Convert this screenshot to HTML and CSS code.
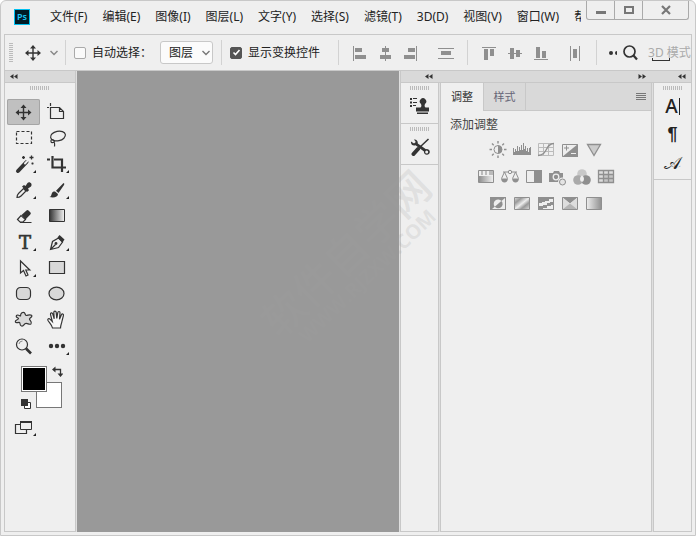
FILE: index.html
```html
<!DOCTYPE html>
<html lang="zh-CN">
<head>
<meta charset="utf-8">
<title>Photoshop</title>
<link rel="stylesheet" href="styles.css">
</head>
<body>
<svg class="defs" aria-hidden="true">
  <defs>
    <linearGradient id="dark-light"><stop offset="0" stop-color="#333"/><stop offset="1" stop-color="#f4f4f4"/></linearGradient>
    <linearGradient id="light-mid"><stop offset="0" stop-color="#eee"/><stop offset="1" stop-color="#8f8f8f"/></linearGradient>
    <linearGradient id="mid-light"><stop offset="0" stop-color="#8f8f8f"/><stop offset="1" stop-color="#eee"/></linearGradient>
    <linearGradient id="stripe" x1="0" y1="0" x2="1" y2="1"><stop offset="0" stop-color="#ddd"/><stop offset=".25" stop-color="#999"/><stop offset=".5" stop-color="#eee"/><stop offset=".7" stop-color="#999"/><stop offset="1" stop-color="#ddd"/></linearGradient>
    <g id="move"><path d="M-6 0H6M0-6V6" fill="none" stroke="currentColor" stroke-width="1.4"/><path d="M0-8l3 3.5h-6zM0 8l3-3.5h-6zM-8 0l3.5-3v6zM8 0l-3.5-3v6z" fill="currentColor"/></g>
    <path id="more" d="M29 19v3h-3z" fill="#222"/>
    <path id="left2" d="M3.500 0v5L0 2.500zM7.500 0v5L4 2.500z" fill="#333"/>
  </defs>
</svg>
<div class="window">
  <header class="titlebar">
    <span class="logo">Ps</span>
    <nav class="menu">
      <a href="#">文件(F)</a><a href="#">编辑(E)</a><a href="#">图像(I)</a><a href="#">图层(L)</a><a href="#">文字(Y)</a><a href="#">选择(S)</a><a href="#">滤镜(T)</a><a href="#">3D(D)</a><a href="#">视图(V)</a><a href="#">窗口(W)</a><a href="#">帮助(H)</a>
    </nav>
    <div class="controls">
      <button aria-label="最小化"><svg width="12" height="12"><path d="M1 7h10v3H1z" fill="#777"/></svg></button>
      <button aria-label="最大化"><svg width="12" height="12"><path d="M2 3h8v6H2z" fill="none" stroke="#777" stroke-width="2"/></svg></button>
      <button class="close" aria-label="关闭"><svg width="12" height="12"><path d="M2 2l8 8M10 2l-8 8" stroke="#777" stroke-width="2.200"/></svg></button>
    </div>
  </header>

  <div class="options">
    <span class="grip upright"></span>
    <svg class="current" width="16" height="16" viewBox="-8 -8 16 16"><use href="#move"/></svg>
    <svg class="drop" width="8" height="6"><path d="M.5 1L4 4.500 7.500 1" fill="none" stroke="#888" stroke-width="1.500"/></svg>
    <span class="rule"></span>
    <label class="check"><input type="checkbox"><span>自动选择：</span></label>
    <span class="picker">
      <select aria-label="自动选择"><option>图层</option><option>组</option></select>
      <svg width="8" height="6"><path d="M.5 1L4 4.500 7.500 1" fill="none" stroke="#777" stroke-width="1.400"/></svg>
    </span>
    <span class="rule"></span>
    <label class="check"><input type="checkbox" checked><span>显示变换控件</span></label>
    <span class="rule wide"></span>
    <div class="aligns">
      <button aria-label="左对齐"><svg viewBox="0 0 26 18"><path d="M6 2h1v15H6zM8 4h7v4H8zM8 11h11v4H8z"/></svg></button>
      <button aria-label="水平居中"><svg viewBox="0 0 26 18"><path d="M12 2h1v15h-1zM9 4h7v4H9zM7 11h11v4H7z"/></svg></button>
      <button aria-label="右对齐"><svg viewBox="0 0 26 18"><path d="M17 2h1v15h-1zM9 4h7v4H9zM5 11h11v4H5z"/></svg></button>
    </div>
    <div class="aligns spread"><button aria-label="垂直分布"><svg viewBox="0 0 26 18"><path d="M5 4h16v1H5zM8 7h10v4H8zM5 14h16v1H5z"/></svg></button></div>
    <span class="rule"></span>
    <div class="aligns">
      <button aria-label="顶对齐"><svg viewBox="0 0 26 18"><path d="M6 3h14v1H6zM8 5h4v11H8zM14 5h4v7h-4z"/></svg></button>
      <button aria-label="垂直居中"><svg viewBox="0 0 26 18"><path d="M6 9h14v1H6zM8 4h4v11H8zM14 6h4v7h-4z"/></svg></button>
      <button aria-label="底对齐"><svg viewBox="0 0 26 18"><path d="M6 15h14v1H6zM8 3h4v11H8zM14 7h4v7h-4z"/></svg></button>
    </div>
    <div class="aligns spread"><button aria-label="水平分布"><svg viewBox="0 0 26 18"><path d="M8 2h1v15H8zM11 5h4v9h-4zM17 2h1v15h-1z"/></svg></button></div>
    <span class="rule"></span>
    <svg class="dots" width="8" height="6"><circle cx="2" cy="3" r="2"/><circle cx="8" cy="3" r="2"/></svg>
    <button class="search" aria-label="搜索"><svg width="15" height="16"><circle cx="6.500" cy="6.500" r="5.500" fill="none" stroke="#333" stroke-width="1.700"/><path d="M10.500 10.500l3.500 4" stroke="#333" stroke-width="2.200"/></svg></button>
    <span class="mode">3D 模式</span>
  </div>

  <main class="workspace">
    <aside class="toolbar">
      <div class="bar left"><svg width="8" height="5"><use href="#left2"/></svg></div>
      <span class="grip"></span>
      <div class="tools">
        <button class="active" aria-label="移动"><svg viewBox="0 0 33 26"><use href="#move" x="16.500" y="13.500"/></svg></button>
        <button aria-label="画板"><svg viewBox="0 0 33 26"><path class="l" d="M9.500 8.500h9l4 4v7h-13zM18.500 8.500v4h4M9.500 4v3M6 8.500h2"/></svg></button>
        <button aria-label="选框"><svg viewBox="0 0 33 26"><path class="l" stroke-dasharray="3 2" d="M9.500 6.500h15v12h-15z"/></svg></button>
        <button aria-label="套索"><svg viewBox="0 0 33 26"><ellipse class="l" cx="17" cy="11" rx="7.500" ry="4.800" transform="rotate(-12 17 11)"/><path class="l" d="M11 14c-2 2-1 4 1 3.500s2-2.500-1-3M12.500 17c2 1 1 2.500 1 4.500"/></svg></button>
        <button aria-label="魔棒"><svg viewBox="0 0 33 26"><path d="M11 20L19.500 11" stroke="#333" stroke-width="4" stroke-linecap="round"/><path d="M18 12.500l2.500-2.700" stroke="#eee" stroke-width="2" stroke-linecap="round"/><path d="M16.500 5v3M15 6.500h3M24.500 4.500v4M22.500 6.500h4M25.500 11.500v2M24.500 12.500h2" stroke="#333" stroke-width="1.300"/><use href="#more"/></svg></button>
        <button aria-label="裁剪"><svg viewBox="0 0 33 26"><path d="M11.500 5v11.500H25M13 8.500h8V21M6 8.500h3" fill="none" stroke="#333" stroke-width="2.200"/><use href="#more" x="-1"/></svg></button>
        <button aria-label="吸管"><svg viewBox="0 0 33 26"><path class="l" d="M10 20.500c0-2 .5-3 1.500-4l5-5 2.500 2.500-5 5c-1 1-2 1.500-4 1.500z"/><path d="M15 9.500l2-1.500 1.500 1 2-3c2-2 5.500 1 3.500 3.500l-3 2 1 1.700-2 1.800z" fill="#333"/><use href="#more"/></svg></button>
        <button aria-label="画笔"><svg viewBox="0 0 33 26"><path d="M22.500 6c1 .5 1 1 .5 2l-5.500 8-2.500-2.300zM14 14.500l3 2.500c0 3-4 4-8.500 3 2-.5 1.500-2 2.500-4 .7-1.200 1.700-1.600 3-1.500z" fill="#333"/><use href="#more" x="-1"/></svg></button>
        <button aria-label="橡皮擦"><svg viewBox="0 0 33 26"><path class="l" d="M10.500 16.500l3.500-4 4.500 4-2.500 2.500h-3zM13 19.500h11.500"/><path d="M14.500 12l5-4.500q1-.8 2 0l2 2q.8 1-.2 2L18.500 16.500z" fill="#333"/></svg></button>
        <button aria-label="渐变"><svg viewBox="0 0 33 26"><path d="M8.500 6.500h15v12h-15z" fill="url(#dark-light)" stroke="#333"/></svg></button>
        <button aria-label="文字"><svg viewBox="0 0 33 26"><text class="type" x="18" y="20" text-anchor="middle">T</text><use href="#more"/></svg></button>
        <button aria-label="钢笔"><svg viewBox="0 0 33 26"><path class="l" d="M9.500 20.500l2-8 6-3.500 4 4-4 5.500zM9.500 20.500l5-5"/><circle cx="15" cy="14.500" r="1.400" fill="#333"/><path d="M16.500 8.500l2-2.500 5 4.500-2 3z" fill="#333"/><use href="#more" x="-1"/></svg></button>
        <button aria-label="路径选择"><svg viewBox="0 0 33 26"><path class="l" d="M13.500 6v12l3-2.500 2.500 5.500 2-1-2.200-5h4z"/><use href="#more"/></svg></button>
        <button aria-label="矩形"><svg viewBox="0 0 33 26"><path class="f" d="M8.500 6.500h15v12h-15z"/></svg></button>
        <button aria-label="圆角矩形"><svg viewBox="0 0 33 26"><rect class="f" x="9.500" y="6.500" width="14" height="12" rx="4"/></svg></button>
        <button aria-label="椭圆"><svg viewBox="0 0 33 26"><ellipse class="f" cx="15.500" cy="12.500" rx="7.500" ry="6.300"/></svg></button>
        <button aria-label="自定形状"><svg viewBox="0 0 33 26"><path class="f" d="M13.500 9c0-3 2.500-4.500 4-3.200 1 1.200.5 2.400 1.700 2.700 1.500.2 3-1.500 5.300-.3 1.500 1.600-2 2.800-2 3.800 0 1.500 3 2.500 1.500 4.800-1.500 1.500-3.500-1-5.500-.3-2 .8-1.500 3-4 2.500-2.200-.7-1-3-2-3.500-1.200-.5-3.500 1.300-4.200-.7-.5-2 3.500-2 3.200-3.300-.3-1-3.200-1-2-3 1.300-1.500 3.700.7 4 .5z"/></svg></button>
        <button aria-label="抓手"><svg viewBox="0 0 33 26"><path class="l hand" d="M11.500 21c-.5-3-3-5-4.500-7.500-.8-1.700 1-2.500 2-1.300l2.300 2.300-1.800-7c-.3-2 1.700-2.300 2.200-.6l1.500 5-.4-6.500c0-1.800 2.200-1.800 2.400 0l.6 6 1-5.800c.4-1.700 2.400-1.300 2.200.4l-.5 6.200 1.900-4.400c.8-1.500 2.400-.8 2 .8L21 14c-.5 3-1.500 4.500-1.500 7z"/></svg></button>
        <button aria-label="缩放"><svg viewBox="0 0 33 26"><circle class="l" cx="15" cy="11.500" r="5.500"/><path d="M12 11q.5-3 3.500-3" fill="none" stroke="#888"/><path d="M19 15.500l5 5" stroke="#333" stroke-width="2.600"/></svg></button>
        <button aria-label="更多工具"><svg viewBox="0 0 33 26"><g fill="#333"><circle cx="10" cy="13" r="2.200"/><circle cx="16" cy="13" r="2.200"/><circle cx="22" cy="13" r="2.200"/></g><use href="#more" x="-1"/></svg></button>
      </div>
      <div class="swatches">
        <button class="swatch back" aria-label="背景色"></button>
        <button class="swatch front" aria-label="前景色"></button>
        <button class="swap" aria-label="切换颜色"><svg width="11" height="11"><path d="M2 3.500h6.500V9" fill="none" stroke="#333" stroke-width="1.300"/><path d="M0 3.500L3.500.5v6zM8.500 11l-3-3.500h6z" fill="#333"/></svg></button>
        <button class="reset" aria-label="默认颜色"><svg width="10" height="10"><path d="M3.500 3.500h6v6h-6z" fill="#fff" stroke="#333"/><path d="M0 0h7v7H0z" fill="#333"/></svg></button>
      </div>
      <button class="screen" aria-label="屏幕模式"><svg viewBox="0 0 33 26"><path class="l" d="M8.500 9.500h11v9h-11z"/><path d="M13.500 6.500h11v8h-11z" fill="#efefef" stroke="#333"/><path d="M13 6h12v2H13z" fill="#333"/><use href="#more" y="-1"/></svg></button>
    </aside>

    <section class="canvas" aria-label="画布"></section>

    <div class="docks">
      <div class="bar split">
        <svg class="first" width="8" height="5"><use href="#left2"/></svg>
        <svg class="second" width="8" height="5"><use href="#left2" transform="translate(8 0) scale(-1 1)"/></svg>
        <svg class="third" width="8" height="5"><use href="#left2"/></svg>
      </div>
      <div class="columns">
        <div class="strip">
          <div class="cell"><span class="grip"></span><button aria-label="仿制源"><svg width="20" height="18"><path d="M0 1h2v2H0zM0 4.500h2v2H0zM0 8h2v2H0zM3 1h4v1H3zM3 5h4v1H3zM3 8h3v1H3z" fill="#333"/><path d="M7 15.500h11V17H7zM6 10.500h4.500q1.500-1 .5-3.500a3.200 3.200 0 1 1 4 0q-1 2.500.5 3.500H19v4H6z" fill="#333"/></svg></button></div>
          <div class="cell"><span class="grip"></span><button aria-label="工具预设"><svg width="20" height="18"><path d="M4 1.500L5.800 4 4 5.500 1 3.500C.5 6.500 3 8.300 5.500 7.300l8.500 6.200a2.900 2.900 0 1 0 2-2.300L7.800 5.500C8 2.500 6 1 4 1.500z" fill="#333"/><circle cx="16.700" cy="14" r="1.500" fill="#eee"/><path d="M18.500 1L9 10" stroke="#333" stroke-width="1.500"/><path d="M8 11l-4.500 5" stroke="#333" stroke-width="4" stroke-linecap="round"/></svg></button></div>
        </div>
        <section class="panel">
          <div class="tabs">
            <button class="tab on">调整</button><button class="tab">样式</button>
            <button class="more" aria-label="面板菜单"><svg width="10" height="8"><path d="M0 .5h10M0 2.500h10M0 4.500h10M0 6.500h10" stroke="#777"/></svg></button>
          </div>
          <h2>添加调整</h2>
          <div class="adjust">
            <button aria-label="亮度/对比度"><svg viewBox="0 0 24 27"><circle cx="12" cy="12.500" r="4" fill="none" stroke="#8f8f8f"/><path d="M12 8.500a4 4 0 0 1 0 8z" fill="#8f8f8f"/><path d="M12 4v2.500M12 18.500V21M3.500 12.500H6M18 12.500h2.500M6 6.500L7.700 8.200M16.300 16.800L18 18.500M18 6.500l-1.700 1.700M7.700 16.800L6 18.500" stroke="#8f8f8f" stroke-width="1.400"/></svg></button>
            <button aria-label="色阶"><svg viewBox="0 0 24 27"><path d="M3 18v-7h1v4h1v-3h1v2h1V9h1v5h1v-4h1v3h1V8h1v5h1V6h1v6h1V9h1v5h1v-3h1v4h1v-4h1v-1h1v8z" fill="#8f8f8f"/></svg></button>
            <button aria-label="曲线"><svg viewBox="0 0 24 27"><path d="M4.500 6.500h15v12h-15zM9.500 6.500v12M14.500 6.500v12M4.500 10.500h15M4.500 14.500h15" fill="none" stroke="#bbb"/><path d="M4 18.500c10 0 7-12 16-12" fill="none" stroke="#8f8f8f" stroke-width="1.300"/></svg></button>
            <button aria-label="曝光度"><svg viewBox="0 0 24 27"><path class="g" d="M4.500 7.500h15v12h-15z"/><path d="M4 20L20 7v13z" fill="#8f8f8f"/><path d="M6 11h5M8.500 8.500v5" stroke="#8f8f8f"/><path d="M13 16.500h5" stroke="#eee"/></svg></button>
            <button aria-label="自然饱和度"><svg viewBox="0 0 24 27"><path d="M5.500 7.500h13l-6.500 11z" fill="#ccc" stroke="#8f8f8f" stroke-width="1.300"/></svg></button>
          </div>
          <div class="adjust">
            <button aria-label="色相/饱和度"><svg viewBox="0 0 24 27"><path class="g" d="M4.500 6.500h15v12h-15z"/><path d="M7 7h2v4H7zM11 7h2v4h-2zM15 7h4v4h-4z" fill="#bbb"/><path d="M5 12h14v6H5z" fill="url(#mid-light)"/></svg></button>
            <button aria-label="色彩平衡"><svg viewBox="0 0 24 27"><path d="M5 8h14M6.500 8l-3 6.500M6.500 8l3 6.500M17.500 8l-3 6.500M17.500 8l3 6.500" fill="none" stroke="#8f8f8f"/><circle cx="12" cy="8" r="1.700" fill="#efefef" stroke="#8f8f8f"/><path d="M3 14.500h7q-.5 4-3.500 4t-3.500-4zM14 14.500h7q-.5 4-3.500 4t-3.500-4z" fill="#8f8f8f"/></svg></button>
            <button aria-label="黑白"><svg viewBox="0 0 24 27"><path class="g" d="M4.500 6.500h15v12h-15z"/><path d="M12 6h8v13h-8z" fill="#8f8f8f"/></svg></button>
            <button aria-label="照片滤镜"><svg viewBox="0 0 24 27"><path d="M3 9h4l1-2h5l1 2h3v9H3z" fill="#8f8f8f"/><circle cx="10" cy="13" r="2.800" fill="#8f8f8f" stroke="#eee" stroke-width="1.300"/><circle cx="16.500" cy="18" r="3" fill="#ddd" stroke="#efefef" stroke-width="3"/><circle cx="16.500" cy="18" r="3" fill="#e4e4e4" stroke="#8f8f8f"/></svg></button>
            <button aria-label="通道混合器"><svg viewBox="0 0 24 27"><circle cx="12" cy="10" r="4.800" fill="#c8c8c8"/><circle cx="8" cy="16" r="4.800" fill="#aaa"/><circle cx="16" cy="16" r="4.800" fill="#8f8f8f"/><path d="M12 11.500q3 2 1.500 5.500l-1.500 1-1.500-1q-1.500-3.500 1.500-5.500z" fill="#eee"/></svg></button>
            <button aria-label="颜色查找"><svg viewBox="0 0 24 27"><path d="M4.500 6.500h15v12h-15z" fill="#ddd"/><path d="M10 11h9v8h-9z" fill="#c4c4c4"/><path d="M4.500 6.500h15v12h-15zM9.500 6.500v12M14.500 6.500v12M4.500 10.500h15M4.500 14.500h15" fill="none" stroke="#8f8f8f" stroke-width="1.300"/></svg></button>
          </div>
          <div class="adjust">
            <button aria-label="反相"><svg viewBox="0 0 24 27"><path d="M4 6h16v13H4z" fill="#8f8f8f"/><path d="M19 7v11H6z" fill="#eee"/><path d="M8.800 15.800A4.300 4.300 0 1 1 15.500 10z" fill="#eee"/><path d="M15.500 10a4.300 4.300 0 0 1-6.700 5.800z" fill="#8f8f8f"/></svg></button>
            <button aria-label="色调分离"><svg viewBox="0 0 24 27"><path d="M4.500 6.500h15v12h-15z" fill="url(#stripe)" stroke="#8f8f8f"/></svg></button>
            <button aria-label="阈值"><svg viewBox="0 0 24 27"><path d="M4 6h16v13H4z" fill="#8f8f8f"/><path d="M5 12h3v-1h3v-1h4V8h4v3h-3v1h-3v2H9v1H5zM9 18v-1h4v-2h4v-1h2v4z" fill="#eee"/></svg></button>
            <button aria-label="可选颜色"><svg viewBox="0 0 24 27"><path class="g" d="M4.500 6.500h15v12h-15z"/><path d="M4 6h16l-8 6.500z" fill="#8f8f8f"/><path d="M5 7l7 5.500L5 18zM19 7l-7 5.500 7 5.500z" fill="#ddd"/><path d="M5 18l7-5.500 7 5.500z" fill="#b4b4b4"/></svg></button>
            <button aria-label="渐变映射"><svg viewBox="0 0 24 27"><path d="M4.500 6.500h15v12h-15z" fill="url(#light-mid)" stroke="#8f8f8f"/></svg></button>
          </div>
        </section>
        <div class="strip">
          <div class="cell glyphs"><span class="grip"></span>
            <button class="char" aria-label="字符">A</button>
            <button class="para" aria-label="段落">¶</button>
            <button class="script" aria-label="字形">𝒜</button>
          </div>
        </div>
      </div>
    </div>
    <div class="watermark" aria-hidden="true"><span>软件自学网</span><small>WWW.RJZXW.COM</small></div>
  </main>
</div>
</body>
</html>
```

FILE: styles.css
```css
* { box-sizing: border-box; }
body {
  margin: 0;
  background: #fff;
  color: #222;
  font: 12px/18px "Noto Sans", "Noto Sans CJK SC", sans-serif;
}
button {
  margin: 0;
  padding: 0;
  border: 0;
  background: none;
  color: inherit;
  font: inherit;
  display: flex;
  align-items: center;
  justify-content: center;
}
svg { display: block; flex: none; }
.defs { position: absolute; width: 0; height: 0; }
.l { fill: none; stroke: #333; stroke-width: 1.2; }
.f { fill: #d8d8d8; stroke: #333; stroke-width: 1.2; }
.g { fill: #eee; stroke: #8f8f8f; }

.window {
  display: flex;
  flex-direction: column;
  min-height: 100vh;
  padding: 0 3px 3px;
  border: 1px solid #c8c8c8;
  border-radius: 6px 6px 0 0;
  background: #efefef;
}

/* Title bar */
.titlebar {
  display: flex;
  align-items: center;
  height: 33px;
  padding: 0 0 2px 10px;
}
.logo {
  flex: none;
  width: 16px;
  height: 16px;
  margin-right: 20px;
  border: 1px solid #00c0f0;
  background: #001c26;
  color: #1cc8f8;
  font-size: 9px;
  font-weight: 600;
  line-height: 13px;
  text-align: center;
}
.menu {
  display: flex;
  flex: 1;
  gap: 15px;
  min-width: 0;
  margin-right: 5px;
  overflow: hidden;
  white-space: nowrap;
}
.menu a { color: #222; text-decoration: none; }
.controls {
  display: flex;
  flex: none;
  align-self: flex-start;
  margin-right: 3px;
  border: 1px solid #aaa;
  border-top: 0;
  border-radius: 0 0 3px 3px;
}
.controls button { width: 28px; height: 18px; border-right: 1px solid #aaa; }
.controls .close { width: 45px; border-right: 0; }

/* Options bar */
.options {
  display: flex;
  align-items: center;
  height: 37px;
  overflow: hidden;
  border: 1px solid #c8c8c8;
  white-space: nowrap;
}
.options > * { flex: none; }
.grip {
  display: block;
  width: 19px;
  height: 4px;
  background: repeating-linear-gradient(90deg, #bbb 0 1px, transparent 1px 2px);
}
.grip.upright {
  width: 4px;
  height: 19px;
  margin-left: 4px;
  background: repeating-linear-gradient(#bbb 0 1px, transparent 1px 2px);
}
.current { margin-left: 12px; color: #333; }
.drop { margin: 0 7px 0 9px; }
.rule { width: 1px; height: 25px; margin-right: 8px; background: #d2d2d2; }
.check { display: flex; align-items: center; gap: 6px; margin-right: 8px; }
.check input {
  appearance: none;
  width: 12px;
  height: 12px;
  margin: 0;
  border: 1px solid #aaa;
  border-radius: 2px;
  background: #fafafa;
}
.check input:checked {
  border-color: #555;
  background: #555 url("data:image/svg+xml,%3Csvg xmlns='http://www.w3.org/2000/svg' viewBox='0 0 9 9'%3E%3Cpath d='M1.500 4.500l2 2L7.500 2' fill='none' stroke='white' stroke-width='1.600'/%3E%3C/svg%3E") center / 9px 9px no-repeat;
}
.picker { position: relative; margin-right: 8px; }
.picker select {
  appearance: none;
  display: block;
  width: 53px;
  height: 23px;
  padding: 0 8px;
  border: 1px solid #c8c8c8;
  border-radius: 3px;
  background: #fbfbfb;
  color: #222;
  font: inherit;
}
.picker svg { position: absolute; right: 3px; top: 9px; pointer-events: none; }
.wide { margin-left: 10px; }
.aligns { display: flex; margin-right: 8px; }
.aligns svg { width: 26px; height: 18px; fill: #8f8f8f; }
.dots { margin: 0 6px 0 4px; fill: #333; }
.search { margin-right: 10px; }
.mode { position: relative; color: #aaa; }
.mode::after {
  content: "";
  position: absolute;
  left: 4px;
  bottom: 1px;
  width: 16px;
  height: 2px;
  border: 1px solid #333;
  border-top: 0;
}

/* Workspace */
.workspace {
  position: relative;
  display: flex;
  flex: 1;
  gap: 1px;
  background: #dfdfdf;
}
.bar {
  display: flex;
  align-items: center;
  height: 12px;
  border-bottom: 1px solid #c8c8c8;
  background: #d9d9d9;
}
.toolbar {
  width: 72px;
  border: 1px solid #c8c8c8;
  border-top: 0;
  background: #efefef;
}
.left { padding-left: 5px; }
.toolbar .grip { margin: 3px 0 9px 25px; }
.tools {
  display: grid;
  grid-template-columns: 33px 33px;
  grid-auto-rows: 26px;
  column-gap: 1px;
  margin-left: 2px;
}
.tools svg, .screen svg { width: 33px; height: 26px; color: #333; }
.tools .active {
  border-radius: 2px;
  background: #c0c0c0;
  box-shadow: inset 0 0 0 1px #a5a5a5;
}
.type { fill: #333; stroke: #333; stroke-width: 0.7; font: 18px "DejaVu Serif", serif; }
.hand { fill: #f8f8f8; }
.swatches { position: relative; width: 41px; height: 43px; margin: 7px 0 0 16px; }
.swatches button { position: absolute; }
.swatch { width: 26px; height: 26px; border: 1px solid #777; }
.front { left: 0; top: 0; background: #000; box-shadow: inset 0 0 0 1px #fff; }
.back { right: 0; top: 16px; background: #fff; }
.swap { right: -1px; top: 0; }
.reset { left: 0; bottom: 0; }
.screen { margin: 6px 0 0 2px; }

.canvas { flex: 1; background: #999; }

.docks { display: flex; flex-direction: column; width: 292px; }
.split { border-left: 1px solid #c8c8c8; border-right: 1px solid #c8c8c8; }
.first { margin-left: 24px; }
.second { margin-left: auto; }
.third { margin: 0 5px 0 32px; }
.columns { display: flex; flex: 1; gap: 1px; }
.strip, .panel {
  border: 1px solid #c8c8c8;
  border-top: 0;
  background: #efefef;
}
.strip { width: 39px; }
.cell {
  display: flex;
  flex-direction: column;
  align-items: center;
  gap: 7px;
  height: 41px;
  padding-top: 3px;
  border-bottom: 1px solid #c8c8c8;
}
.glyphs { height: 97px; gap: 5px; }
.glyphs button { height: 23px; }
.glyphs .char {
  height: 17px;
  margin: 3px 0;
  padding-right: 1px;
  border-right: 1px solid #222;
  font: 500 19px/17px "Noto Sans", sans-serif;
}
.para { font: bold 18px/23px "Liberation Sans", sans-serif; }
.script { font: 18px/23px "DejaVu Serif", serif; }

.panel { flex: 1; }
.tabs {
  display: flex;
  height: 28px;
  border-bottom: 1px solid #c8c8c8;
  background: #d9d9d9;
}
.tab { width: 42px; border-right: 1px solid #c8c8c8; color: #667; font-size: 11px; }
.tab.on { width: 43px; margin-bottom: -1px; background: #efefef; color: #333; }
.more { margin: 0 5px 0 auto; }
h2 {
  margin: 5px 9px 3px;
  color: #444;
  font-size: 12px;
  font-weight: 400;
  line-height: 18px;
}
.adjust { display: flex; justify-content: center; }
.adjust svg { width: 24px; height: 27px; }

/* Watermark laid over the canvas and the first dock */
.watermark {
  position: absolute;
  right: 232px;
  top: 158px;
  display: flex;
  flex-direction: column;
  align-items: center;
  color: rgba(160, 160, 160, 0.2);
  transform: rotate(-44deg);
  pointer-events: none;
  white-space: nowrap;
}
.watermark span { font-size: 43px; font-weight: 500; line-height: 43px; }
.watermark small { font: bold 20px/20px "Open Sans", sans-serif; }
```
